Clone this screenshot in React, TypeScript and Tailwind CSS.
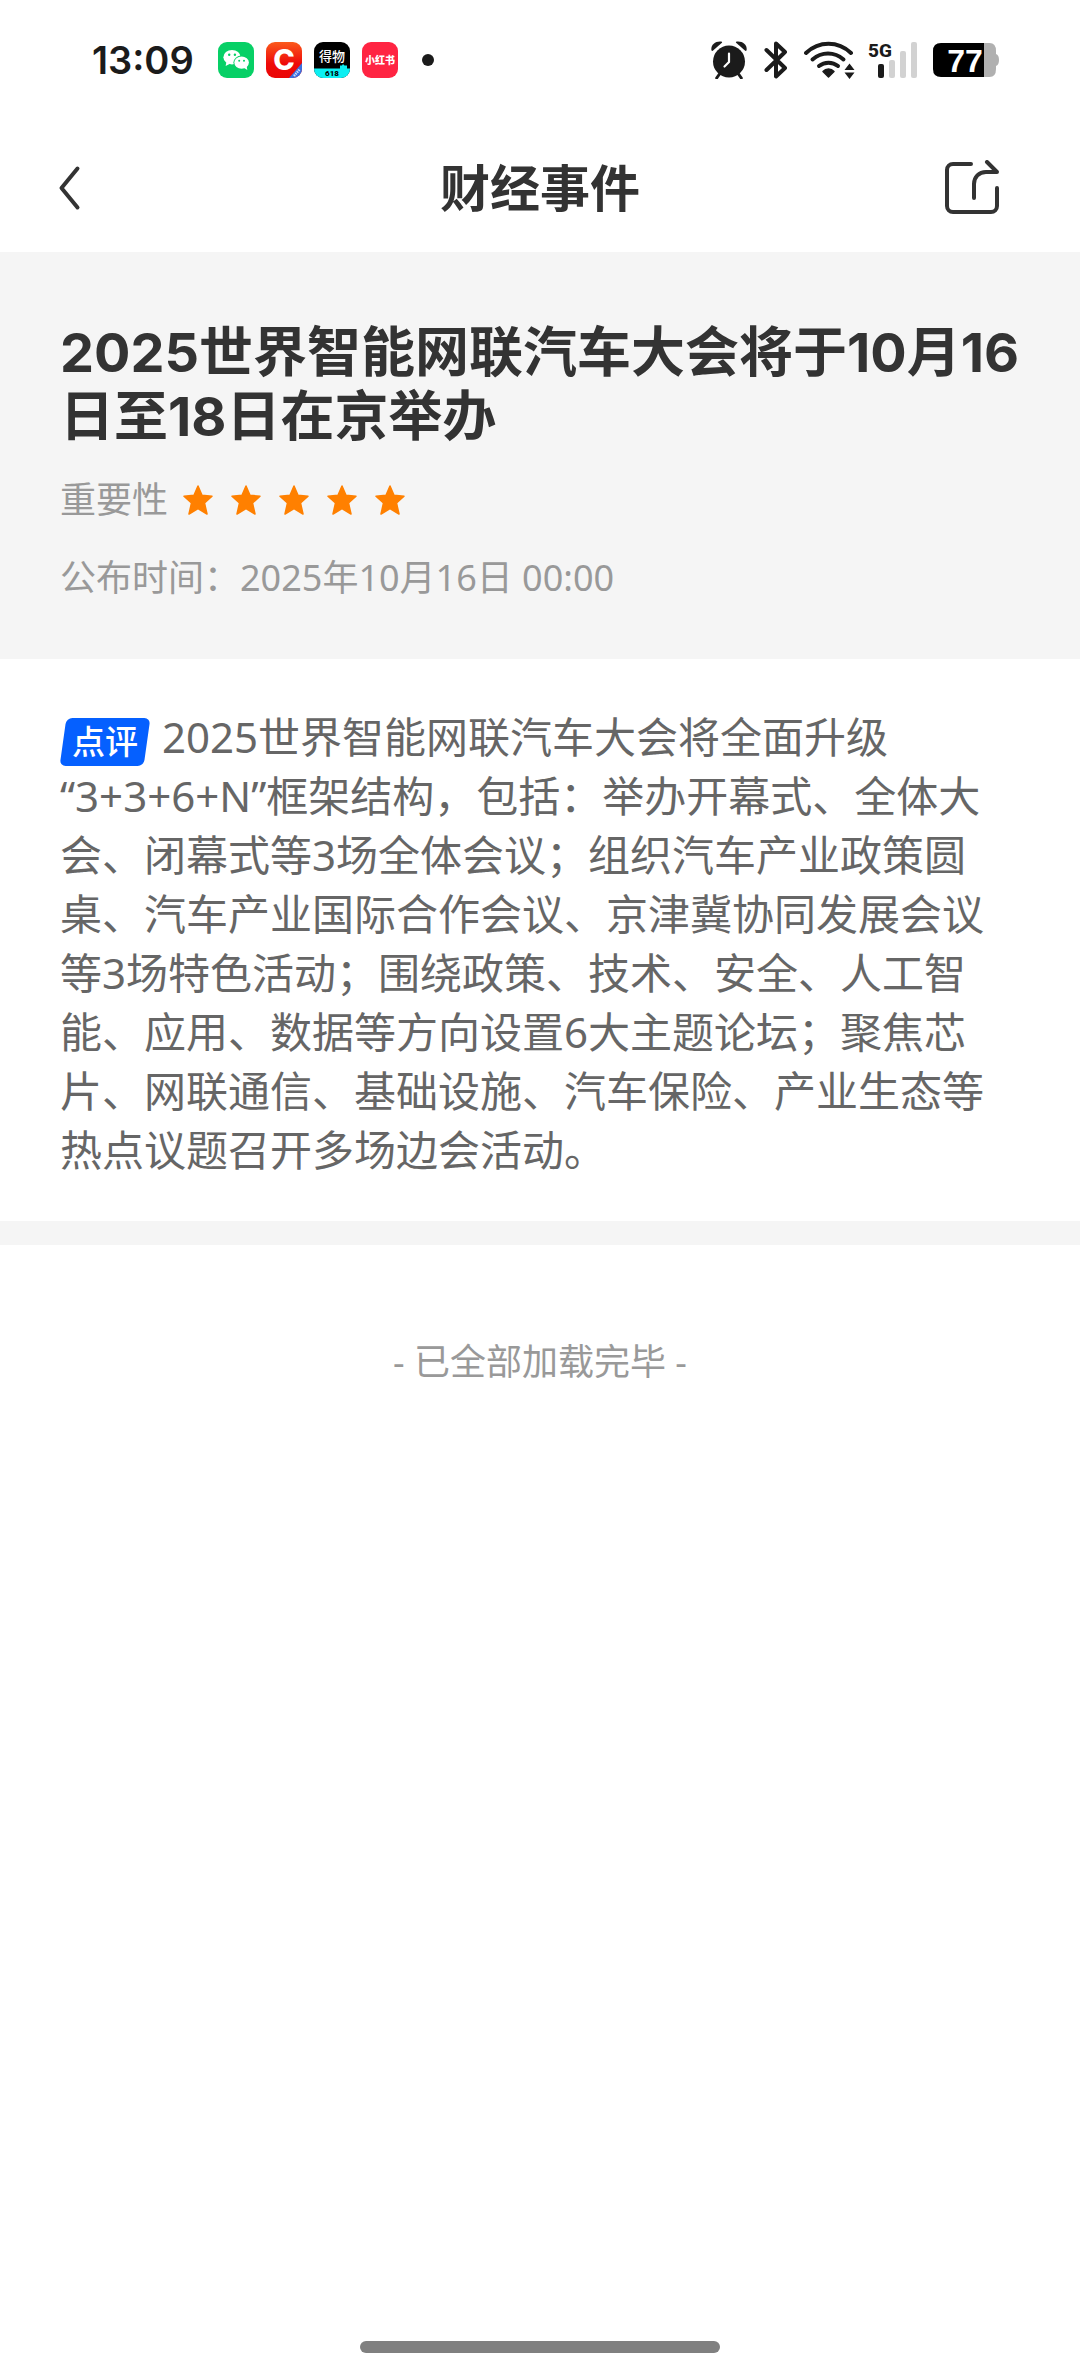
import type { ReactNode } from 'react'

const EVENT = {
  title: '2025世界智能网联汽车大会将于10月16日至18日在京举办',
  importance: 5,
  publishedAt: '2025年10月16日 00:00',
  comment:
    '2025世界智能网联汽车大会将全面升级“3+3+6+N”框架结构，包括：举办开幕式、全体大会、闭幕式等3场全体会议；组织汽车产业政策圆桌、汽车产业国际合作会议、京津冀协同发展会议等3场特色活动；围绕政策、技术、安全、人工智能、应用、数据等方向设置6大主题论坛；聚焦芯片、网联通信、基础设施、汽车保险、产业生态等热点议题召开多场边会活动。',
}

function AppIcon({ children }: { children: ReactNode }) {
  return (
    <svg viewBox="0 0 36 36" className="size-9 shrink-0 overflow-hidden rounded-[9px]" aria-hidden="true">
      {children}
    </svg>
  )
}

function NotificationIcons() {
  return (
    <div className="flex items-center gap-3">
      {/* WeChat */}
      <AppIcon>
        <rect width="36" height="36" fill="#07d066" />
        <ellipse cx="14" cy="15.2" rx="8.6" ry="7.2" fill="#fff" />
        <path d="M8.5 19.5 7.6 24l4.4-2.3z" fill="#fff" />
        <ellipse cx="23.6" cy="20.6" rx="8.2" ry="7" fill="#07d066" />
        <ellipse cx="23.6" cy="20.6" rx="7.3" ry="6.1" fill="#fff" />
        <path d="m25.5 25.5 3.8 2.4-.7-4z" fill="#fff" />
        <circle cx="11.2" cy="12.8" r="1.2" fill="#07d066" />
        <circle cx="16.9" cy="12.8" r="1.2" fill="#07d066" />
        <circle cx="21.2" cy="18.8" r="1" fill="#07d066" />
        <circle cx="26" cy="18.8" r="1" fill="#07d066" />
      </AppIcon>
      {/* Cailianshe */}
      <AppIcon>
        <defs>
          <linearGradient id="cls" x1="0" y1="0" x2="0" y2="1">
            <stop offset="0" stopColor="#fb5a1c" />
            <stop offset="0.6" stopColor="#ee0a0a" />
            <stop offset="1" stopColor="#ea0505" />
          </linearGradient>
        </defs>
        <rect width="36" height="36" fill="url(#cls)" />
        <text x="18" y="28" textAnchor="middle" fontSize="29" fontWeight="800" fill="#fff" fontFamily="Inter, sans-serif">
          C
        </text>
        <path d="M36 21v15H23z" fill="#3a6fe0" />
        <path d="m28 34 6-7" stroke="#c9dafb" strokeWidth="2.4" strokeDasharray="1.5 0.8" />
      </AppIcon>
      {/* Dewu */}
      <AppIcon>
        <rect width="36" height="36" fill="#000" />
        <text x="18" y="19" textAnchor="middle" fontSize="13" fontWeight="500" fill="#fff" fontFamily="'Noto Sans CJK SC', sans-serif">
          得物
        </text>
        <path d="M0 26.5h26v-3h2l1-1.5 1.5 1.5H33v3h3V36H0z" fill="#0ceff2" />
        <text x="18" y="34" textAnchor="middle" fontSize="8" fontWeight="800" fill="#000" fontFamily="Roboto, sans-serif">
          618
        </text>
      </AppIcon>
      {/* Xiaohongshu */}
      <AppIcon>
        <rect width="36" height="36" fill="#ff2442" />
        <text x="18" y="22" textAnchor="middle" fontSize="10" fontWeight="900" fill="#fff" fontFamily="'Noto Sans CJK SC', sans-serif">
          小红书
        </text>
      </AppIcon>
      <span className="ml-3 size-3 rounded-full bg-[#1b1b1b]" />
    </div>
  )
}

function AlarmIcon() {
  return (
    <svg viewBox="0 0 38 38" className="h-[38px] w-[38px]" fill="#1b1b1b" aria-label="闹钟">
      <path d="M1.5 9.5C.3 4.5 5-.3 11.5.6L12.2 1.5 2.5 10z" />
      <path d="M36.5 9.5c1.2-5-3.5-9.8-10-8.9l-.7.9 9.7 8.5z" />
      <circle cx="19" cy="20.5" r="16" />
      <path d="m9.500 33-2.800 4M28.500 33l2.800 4" stroke="#1b1b1b" strokeWidth="3" strokeLinecap="round" />
      <path d="M19 12.5V21l-4.5 4.500" fill="none" stroke="#fff" strokeWidth="2.2" strokeLinecap="round" strokeLinejoin="round" />
    </svg>
  )
}

function BluetoothIcon() {
  return (
    <svg viewBox="0 0 24 38" className="h-[38px] w-6" fill="none" aria-label="蓝牙">
      <path
        d="m2.500 9 18.500 18-9 8.500V2.500l9 8.500L2.500 29"
        stroke="#1b1b1b"
        strokeWidth="4"
        strokeLinecap="round"
        strokeLinejoin="round"
      />
    </svg>
  )
}

function WifiIcon() {
  return (
    <svg viewBox="0 0 52 38" className="h-[38px] w-[52px]" fill="none" aria-label="无线网络">
      <g stroke="#1b1b1b" strokeWidth="4" strokeLinecap="round">
        <path d="M2 12C15-.3 34-.3 47 12" />
        <path d="M8.500 18.500c9-8 22-8 31 0" />
        <path d="M15 25c5.500-4.500 13.500-4.500 19 0" />
      </g>
      <path d="M19 30.500c3-3.200 8-3.200 11 0L24.500 36z" fill="#1b1b1b" stroke="#1b1b1b" strokeWidth="1.5" strokeLinejoin="round" />
      <path d="m45.500 22.500 5 6.500h-10zM45.500 38l5-6.500h-10z" fill="#1b1b1b" />
    </svg>
  )
}

function SignalIcon() {
  return (
    <svg viewBox="0 0 49 38" className="h-[38px] w-[49px] overflow-visible" aria-label="5G 信号">
      <text x="0" y="16" fontSize="19" fontWeight="800" fill="#1b1b1b" fontFamily="Roboto, sans-serif">
        5G
      </text>
      <rect x="10" y="23" width="6" height="14" rx="2" fill="#1b1b1b" />
      <rect x="21" y="19" width="6" height="18" rx="2" fill="#d2d2d2" />
      <rect x="32" y="10" width="6" height="27" rx="2" fill="#d2d2d2" />
      <rect x="43" y="1" width="6" height="36" rx="2" fill="#d2d2d2" />
    </svg>
  )
}

function BatteryIcon() {
  return (
    <svg viewBox="0 0 66 34" className="h-[34px] w-[66px] overflow-visible" aria-label="电量 77%">
      <path d="M51 0h5.500q6.500 0 6.500 8v3q3 1 3 6t-3 6v3q0 8-6.500 8H51z" fill="#b0b0b0" />
      <path d="M8 0h43v34H8q-8 0-8-8V8q0-8 8-8z" fill="#000" />
      <text x="32" y="29" textAnchor="middle" fontSize="32" fontWeight="700" fill="#fff" fontFamily="'Liberation Sans', sans-serif">
        77
      </text>
    </svg>
  )
}

function StatusBar() {
  return (
    <div className="flex h-[120px] items-center justify-between pr-[81px] pl-[92px]">
      <div className="flex items-center gap-6">
        <time className="font-[Inter,sans-serif] text-[38px] leading-none font-semibold text-[#1b1b1b]">13:09</time>
        <NotificationIcons />
      </div>
      <div className="flex items-center gap-4">
        <AlarmIcon />
        <BluetoothIcon />
        <div className="flex gap-3">
          <WifiIcon />
          <SignalIcon />
        </div>
        <BatteryIcon />
      </div>
    </div>
  )
}

function Star() {
  return (
    <svg viewBox="0 0 30 30" className="size-[30px]" fill="#ff8000" stroke="#ff8000" strokeWidth="1.5" strokeLinejoin="round" aria-hidden="true">
      <path d="m15 1 4 9.300 10 .9-7.500 6.800 2.500 11L15 23.500 6 29l2.500-11L1 11.200l10-.9z" />
    </svg>
  )
}

export default function App() {
  return (
    <div
      lang="zh-CN"
      className="flex min-h-screen flex-col bg-white font-['Noto_Sans','Noto_Sans_CJK_SC',sans-serif] text-[#666]"
    >
      <StatusBar />

      {/* Nav bar */}
      <header className="grid h-[132px] grid-cols-[1fr_auto_1fr] items-center px-14 pt-1 text-[#333]">
        <button type="button" aria-label="返回" className="justify-self-start">
          <svg viewBox="0 0 26 48" className="h-12 w-[26px]" fill="none">
            <path d="M21.500 4.500 5.500 24l16 19.500" stroke="currentColor" strokeWidth="4" strokeLinecap="round" strokeLinejoin="round" />
          </svg>
        </button>
        <h1 className="text-[50px] leading-[64px] font-bold">财经事件</h1>
        <button type="button" aria-label="分享" className="mr-6 justify-self-end">
          <svg viewBox="0 0 56 56" className="size-14" fill="none" stroke="currentColor" strokeWidth="4" strokeLinecap="round" strokeLinejoin="round">
            <path d="M27 4H9a6 6 0 0 0-6 6v36a6 6 0 0 0 6 6h38a6 6 0 0 0 6-6V28" />
            <path d="M30 38V24c0-7 5-12 12-12h11L43 2" />
          </svg>
        </button>
      </header>

      {/* Event summary */}
      <section className="bg-[#f5f5f5] pt-[69px] pr-12 pb-[54px] pl-[60px] text-4xl leading-[54px] text-[#999]">
        <h2 className="font-[Inter,'Noto_Sans_CJK_SC',sans-serif] text-[54px] leading-16 font-bold text-[#333]">{EVENT.title}</h2>
        <div className="mt-6 flex items-center gap-[15px]">
          <span>重要性</span>
          <div className="flex gap-[18px]" role="img" aria-label={`${EVENT.importance} 星`}>
            {Array.from({ length: EVENT.importance }, (_, i) => (
              <Star key={i} />
            ))}
          </div>
        </div>
        <p className="mt-6">公布时间：{EVENT.publishedAt}</p>
      </section>

      {/* Comment */}
      <section className="border-b-24 border-[#f5f5f5] px-[60px] pt-12 pb-[42px]">
        <p className="text-[42px] leading-[59px]">
          <span className="relative isolate mr-3 inline-block h-12 px-3 align-middle text-[33px] leading-12 font-medium text-white before:absolute before:inset-x-[3px] before:inset-y-0 before:-z-10 before:-skew-x-8 before:rounded-md before:bg-[#0560ff]">
            点评
          </span>
          {EVENT.comment}
        </p>
      </section>

      <p className="pt-[90px] text-center text-4xl leading-[54px] text-[#999]">- 已全部加载完毕 -</p>

      {/* Gesture bar */}
      <div className="mt-auto flex justify-center pt-12 pb-[21px]">
        <span className="h-3 w-1/3 rounded-full bg-[#808080]" />
      </div>
    </div>
  )
}
